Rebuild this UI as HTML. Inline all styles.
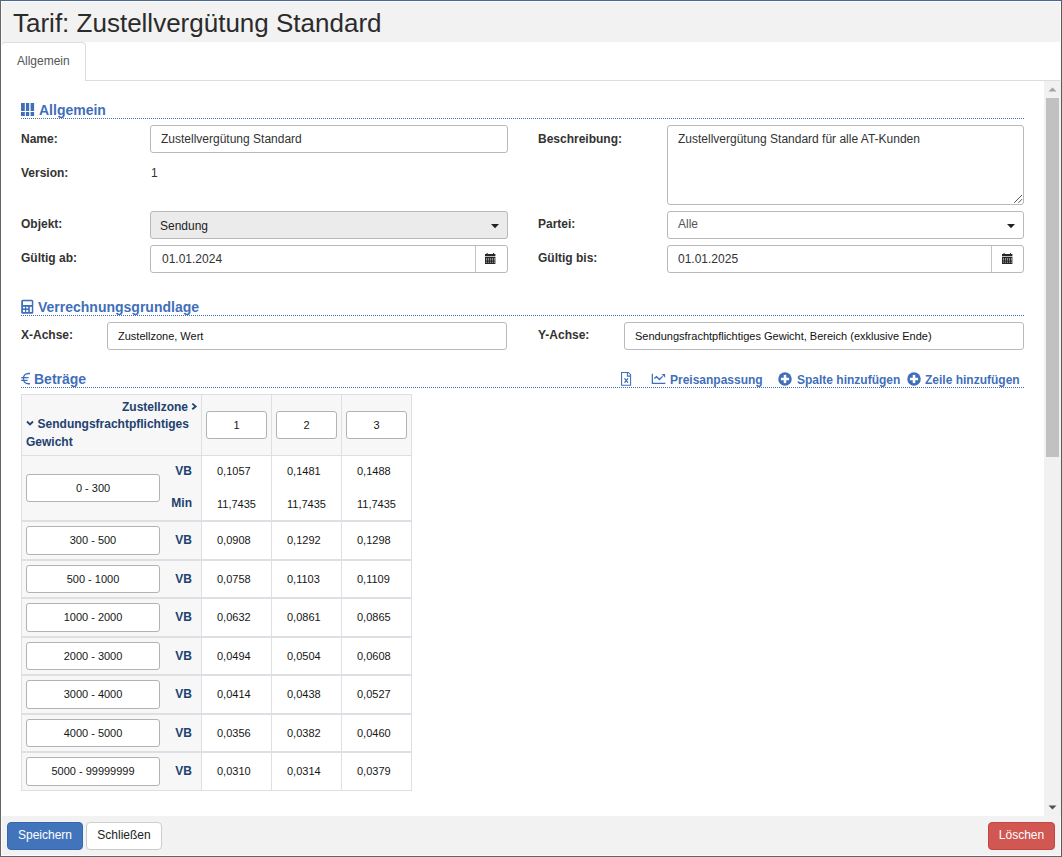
<!DOCTYPE html>
<html><head><meta charset="utf-8"><style>
*{box-sizing:border-box;margin:0;padding:0}
html,body{width:1062px;height:857px;overflow:hidden;background:#fff;font-family:"Liberation Sans",sans-serif;font-size:12px;color:#333}
.a{position:absolute;white-space:nowrap}
.r{position:absolute}
.sech{position:absolute;white-space:nowrap;font-weight:bold;font-size:14px;color:#3f6fba;line-height:16px}
.lnk{position:absolute;white-space:nowrap;font-weight:bold;font-size:12px;color:#3f6fba;line-height:14px}
.lbl{position:absolute;white-space:nowrap;font-weight:bold;font-size:12px;color:#333;line-height:14px}
.inp{position:absolute;border:1px solid #b9b9b9;border-radius:3px;background:#fff}
.txt{position:absolute;white-space:nowrap;line-height:14px;color:#333}
.dot{position:absolute;left:21px;width:1003px;height:1px;border-top:1px dotted #3f6fba}
.th{position:absolute;white-space:nowrap;font-weight:bold;font-size:12px;color:#21416f;line-height:14px}
.tv{position:absolute;white-space:nowrap;font-size:11px;color:#161616;line-height:13px}
.ti{position:absolute;border:1px solid #b3b3b3;border-radius:3px;background:#fff}
.hl{position:absolute;background:#dcdfe3}
</style></head><body>
<div class="r" style="left:1px;top:1px;width:1060px;height:41px;background:#f2f2f2;border-top:1px solid #fbfbfb;border-left:1px solid #fbfbfb"></div>
<div class="a" style="left:13px;top:8px;font-size:26px;color:#2b2b2b;line-height:30px">Tarif: Zustellvergütung Standard</div>
<div class="r" style="left:1px;top:80px;width:1060px;height:1px;background:#ddd;"></div>
<div class="r" style="left:1px;top:42px;width:85px;height:39px;border:1px solid #ddd;border-bottom:0;border-radius:4px 4px 0 0;background:#fff"></div>
<div class="a" style="left:17px;top:54px;font-size:12px;color:#555;line-height:14px">Allgemein</div>
<svg class="r" style="left:20px;top:102px" width="16" height="16" viewBox="20 102 16 16"><g fill="#3f6fba"><rect x="21" y="103" width="3.8" height="8"/><rect x="25.9" y="103" width="3.3" height="8"/><rect x="30.6" y="103" width="3.5" height="8"/><rect x="21" y="112" width="3.8" height="4"/><rect x="25.9" y="112" width="3.3" height="4"/><rect x="30.6" y="112" width="3.5" height="4"/></g></svg>
<div class="sech" style="left:39px;top:102px">Allgemein</div>
<div class="dot" style="top:118px"></div>
<div class="lbl" style="left:21px;top:132px">Name:</div>
<div class="inp" style="left:150px;top:125px;width:358px;height:28px"></div>
<div class="txt" style="left:161px;top:132px">Zustellvergütung Standard</div>
<div class="lbl" style="left:21px;top:166px">Version:</div>
<div class="txt" style="left:151px;top:166px">1</div>
<div class="lbl" style="left:538px;top:132px">Beschreibung:</div>
<div class="inp" style="left:667px;top:125px;width:357px;height:80px"></div>
<div class="txt" style="left:678px;top:132px">Zustellvergütung Standard für alle AT-Kunden</div>
<svg class="r" style="left:1010px;top:191px" width="14" height="14" viewBox="1010 191 14 14"><g stroke="#555" stroke-width="1" fill="none"><line x1="1014.2" y1="202.8" x2="1022" y2="195"/><line x1="1018.4" y1="202.8" x2="1022" y2="199.2"/></g></svg>
<div class="lbl" style="left:21px;top:217px">Objekt:</div>
<div class="inp" style="left:150px;top:211px;width:358px;height:28px;background:#ebebeb"></div>
<div class="txt" style="left:160px;top:219px;color:#222">Sendung</div>
<svg class="r" style="left:490px;top:223px" width="10" height="6" viewBox="490 223 10 6"><path d="M491 224 L499 224 L495 228.3 Z" fill="#222"/></svg>
<div class="lbl" style="left:538px;top:217px">Partei:</div>
<div class="inp" style="left:667px;top:211px;width:357px;height:28px"></div>
<div class="txt" style="left:678px;top:217px;color:#555">Alle</div>
<svg class="r" style="left:1006px;top:223px" width="10" height="6" viewBox="1006 223 10 6"><path d="M1007 224 L1015 224 L1011 228.3 Z" fill="#222"/></svg>
<div class="lbl" style="left:21px;top:251px">Gültig ab:</div>
<div class="inp" style="left:150px;top:245px;width:358px;height:28px"></div>
<div class="r" style="left:475px;top:246px;width:1px;height:26px;background:#c4c4c4;"></div>
<div class="txt" style="left:162px;top:252px">01.01.2024</div>
<svg class="r" style="left:484.2px;top:252px" width="13" height="13" viewBox="484.2 252 13 13"><g fill="#262626"><rect x="486.8" y="252.9" width="1" height="1.2"/><rect x="493.3" y="252.9" width="1" height="1.2"/><rect x="485.2" y="254" width="10.4" height="2.1"/><rect x="485.2" y="256.1" width="10.4" height="0.9" fill="#bbb"/><rect x="485.2" y="257" width="10.4" height="7"/></g><g fill="#9c9c9c"><rect x="486.09999999999997" y="258" width="1" height="2.6"/><rect x="486.09999999999997" y="261.6" width="1" height="1.3"/><rect x="488.09999999999997" y="258" width="1" height="2.6"/><rect x="488.09999999999997" y="261.6" width="1" height="1.3"/><rect x="490.09999999999997" y="258" width="1" height="2.6"/><rect x="490.09999999999997" y="261.6" width="1" height="1.3"/><rect x="492.09999999999997" y="258" width="1" height="2.6"/><rect x="492.09999999999997" y="261.6" width="1" height="1.3"/><rect x="494.09999999999997" y="258" width="1" height="2.6"/><rect x="494.09999999999997" y="261.6" width="1" height="1.3"/></g></svg>
<div class="lbl" style="left:538px;top:251px">Gültig bis:</div>
<div class="inp" style="left:667px;top:245px;width:357px;height:28px"></div>
<div class="r" style="left:991px;top:246px;width:1px;height:26px;background:#c4c4c4;"></div>
<div class="txt" style="left:678px;top:252px">01.01.2025</div>
<svg class="r" style="left:1001px;top:252px" width="13" height="13" viewBox="1001 252 13 13"><g fill="#262626"><rect x="1003.6" y="252.9" width="1" height="1.2"/><rect x="1010.1" y="252.9" width="1" height="1.2"/><rect x="1002" y="254" width="10.4" height="2.1"/><rect x="1002" y="256.1" width="10.4" height="0.9" fill="#bbb"/><rect x="1002" y="257" width="10.4" height="7"/></g><g fill="#9c9c9c"><rect x="1002.9" y="258" width="1" height="2.6"/><rect x="1002.9" y="261.6" width="1" height="1.3"/><rect x="1004.9" y="258" width="1" height="2.6"/><rect x="1004.9" y="261.6" width="1" height="1.3"/><rect x="1006.9" y="258" width="1" height="2.6"/><rect x="1006.9" y="261.6" width="1" height="1.3"/><rect x="1008.9" y="258" width="1" height="2.6"/><rect x="1008.9" y="261.6" width="1" height="1.3"/><rect x="1010.9" y="258" width="1" height="2.6"/><rect x="1010.9" y="261.6" width="1" height="1.3"/></g></svg>
<svg class="r" style="left:20px;top:299px" width="15" height="16" viewBox="20 299 15 16"><rect x="21.2" y="299.8" width="12.1" height="14" rx="1.5" fill="#3f6fba"/><g fill="#fff"><rect x="23" y="301.3" width="8.8" height="3.7"/><rect x="23" y="306.8" width="2" height="1.6"/><rect x="26.2" y="306.8" width="2" height="1.6"/><rect x="23" y="310" width="2" height="2"/><rect x="26.2" y="310" width="2" height="2"/><rect x="29.8" y="306.8" width="2" height="5.2"/></g></svg>
<div class="sech" style="left:38px;top:299px">Verrechnungsgrundlage</div>
<div class="dot" style="top:315px"></div>
<div class="lbl" style="left:21px;top:328px">X-Achse:</div>
<div class="inp" style="left:107px;top:322px;width:400px;height:28px"></div>
<div class="txt" style="left:118px;top:329px;font-size:11px;color:#111">Zustellzone, Wert</div>
<div class="lbl" style="left:538px;top:328px">Y-Achse:</div>
<div class="inp" style="left:624px;top:322px;width:400px;height:28px"></div>
<div class="txt" style="left:635px;top:329px;font-size:11px;color:#111">Sendungsfrachtpflichtiges Gewicht, Bereich (exklusive Ende)</div>
<svg class="r" style="left:19px;top:371px" width="13" height="15" viewBox="19 371 13 15"><g fill="none" stroke="#3f6fba" stroke-width="1.4"><path d="M30 373.5 H28.6 C25.2 373.5 23.4 376 23.4 378.6 C23.4 381.3 25.2 383.8 28.6 383.8 H30"/><path d="M21.2 377.6 H28.6 M21.2 380.4 H27.6"/></g></svg>
<div class="sech" style="left:34px;top:371px">Beträge</div>
<div class="dot" style="top:387px"></div>
<svg class="r" style="left:620px;top:371px" width="13" height="16" viewBox="620 371 13 16"><g fill="none" stroke="#3f6fba" stroke-width="1.05"><path d="M621.55 372.45 H628.3 L630.6 374.75 V385.2 H621.55 Z"/><path d="M627.4 372.45 V376.1 H630.6"/><path d="M624.5 378.4 L628 382.6 M628 378.4 L624.5 382.6" stroke-width="1.35"/></g></svg>
<svg class="r" style="left:650px;top:372px" width="17" height="13" viewBox="650 372 17 13"><g fill="none" stroke="#3f6fba" stroke-width="1.25"><path d="M652.35 373.8 V383.35 H665.4"/><path d="M654.3 378.6 L656.5 376.7 L659.5 379.5 L662.6 376.4" stroke-width="1.3"/></g><path d="M661.6 374.1 H665.1 V377.7 Z" fill="#3f6fba"/></svg>
<div class="lnk" style="left:670px;top:373px">Preisanpassung</div>
<svg class="r" style="left:777px;top:370.7px" width="16" height="16" viewBox="777 370.7 16 16"><circle cx="785" cy="378.7" r="6.75" fill="#3f6fba"/><rect x="780.9" y="377.45" width="8.2" height="2.5" fill="#fff"/><rect x="783.75" y="374.59999999999997" width="2.5" height="8.2" fill="#fff"/></svg>
<div class="lnk" style="left:797px;top:373px">Spalte hinzufügen</div>
<svg class="r" style="left:905.9px;top:370.7px" width="16" height="16" viewBox="905.9 370.7 16 16"><circle cx="913.9" cy="378.7" r="6.75" fill="#3f6fba"/><rect x="909.8" y="377.45" width="8.2" height="2.5" fill="#fff"/><rect x="912.65" y="374.59999999999997" width="2.5" height="8.2" fill="#fff"/></svg>
<div class="lnk" style="left:925px;top:373px">Zeile hinzufügen</div>
<div class="r" style="left:22px;top:395px;width:389px;height:60px;background:#f7f7f7;"></div>
<div class="r" style="left:22px;top:456px;width:179px;height:334px;background:#f7f7f7;"></div>
<div class="th" style="left:122px;top:400px">Zustellzone</div>
<svg class="r" style="left:190px;top:402px" width="8" height="9" viewBox="190 402 8 9"><path d="M192.3 403.6 L195.6 406.4 L192.3 409.2" fill="none" stroke="#25446f" stroke-width="1.9"/></svg>
<svg class="r" style="left:25px;top:419px" width="10" height="8" viewBox="0 0 10 8"><path d="M2 2.5 L5 5.5 L8 2.5" fill="none" stroke="#25446f" stroke-width="1.8"/></svg>
<div class="th" style="left:37.6px;top:417px">Sendungsfrachtpflichtiges</div>
<div class="th" style="left:26px;top:435px">Gewicht</div>
<div class="ti" style="left:206px;top:411px;width:61px;height:28px"></div>
<div class="tv" style="left:206px;top:419px;width:61px;text-align:center">1</div>
<div class="ti" style="left:276px;top:411px;width:61px;height:28px"></div>
<div class="tv" style="left:276px;top:419px;width:61px;text-align:center">2</div>
<div class="ti" style="left:346px;top:411px;width:61px;height:28px"></div>
<div class="tv" style="left:346px;top:419px;width:61px;text-align:center">3</div>
<div class="ti" style="left:26px;top:474px;width:134px;height:28px"></div>
<div class="tv" style="left:26px;top:482px;width:134px;text-align:center">0 - 300</div>
<div class="th" style="left:142px;width:50px;text-align:right;top:464px">VB</div>
<div class="th" style="left:142px;width:50px;text-align:right;top:496px">Min</div>
<div class="tv" style="left:217px;top:465px">0,1057</div>
<div class="tv" style="left:217px;top:498px">11,7435</div>
<div class="tv" style="left:287px;top:465px">0,1481</div>
<div class="tv" style="left:287px;top:498px">11,7435</div>
<div class="tv" style="left:357px;top:465px">0,1488</div>
<div class="tv" style="left:357px;top:498px">11,7435</div>
<div class="ti" style="left:26px;top:526px;width:134px;height:29px"></div>
<div class="tv" style="left:26px;top:534px;width:134px;text-align:center">300 - 500</div>
<div class="th" style="left:142px;width:50px;text-align:right;top:533px">VB</div>
<div class="tv" style="left:217px;top:534px">0,0908</div>
<div class="tv" style="left:287px;top:534px">0,1292</div>
<div class="tv" style="left:357px;top:534px">0,1298</div>
<div class="ti" style="left:26px;top:565px;width:134px;height:28px"></div>
<div class="tv" style="left:26px;top:573px;width:134px;text-align:center">500 - 1000</div>
<div class="th" style="left:142px;width:50px;text-align:right;top:572px">VB</div>
<div class="tv" style="left:217px;top:573px">0,0758</div>
<div class="tv" style="left:287px;top:573px">0,1103</div>
<div class="tv" style="left:357px;top:573px">0,1109</div>
<div class="ti" style="left:26px;top:603px;width:134px;height:29px"></div>
<div class="tv" style="left:26px;top:611px;width:134px;text-align:center">1000 - 2000</div>
<div class="th" style="left:142px;width:50px;text-align:right;top:610px">VB</div>
<div class="tv" style="left:217px;top:611px">0,0632</div>
<div class="tv" style="left:287px;top:611px">0,0861</div>
<div class="tv" style="left:357px;top:611px">0,0865</div>
<div class="ti" style="left:26px;top:642px;width:134px;height:28px"></div>
<div class="tv" style="left:26px;top:650px;width:134px;text-align:center">2000 - 3000</div>
<div class="th" style="left:142px;width:50px;text-align:right;top:649px">VB</div>
<div class="tv" style="left:217px;top:650px">0,0494</div>
<div class="tv" style="left:287px;top:650px">0,0504</div>
<div class="tv" style="left:357px;top:650px">0,0608</div>
<div class="ti" style="left:26px;top:680px;width:134px;height:29px"></div>
<div class="tv" style="left:26px;top:688px;width:134px;text-align:center">3000 - 4000</div>
<div class="th" style="left:142px;width:50px;text-align:right;top:687px">VB</div>
<div class="tv" style="left:217px;top:688px">0,0414</div>
<div class="tv" style="left:287px;top:688px">0,0438</div>
<div class="tv" style="left:357px;top:688px">0,0527</div>
<div class="ti" style="left:26px;top:719px;width:134px;height:28px"></div>
<div class="tv" style="left:26px;top:727px;width:134px;text-align:center">4000 - 5000</div>
<div class="th" style="left:142px;width:50px;text-align:right;top:726px">VB</div>
<div class="tv" style="left:217px;top:727px">0,0356</div>
<div class="tv" style="left:287px;top:727px">0,0382</div>
<div class="tv" style="left:357px;top:727px">0,0460</div>
<div class="ti" style="left:26px;top:757px;width:134px;height:29px"></div>
<div class="tv" style="left:26px;top:765px;width:134px;text-align:center">5000 - 99999999</div>
<div class="th" style="left:142px;width:50px;text-align:right;top:764px">VB</div>
<div class="tv" style="left:217px;top:765px">0,0310</div>
<div class="tv" style="left:287px;top:765px">0,0314</div>
<div class="tv" style="left:357px;top:765px">0,0379</div>
<div class="r" style="left:21px;top:394px;width:391px;height:1px;background:#dcdfe3;"></div>
<div class="r" style="left:21px;top:455px;width:391px;height:1px;background:#dcdfe3;"></div>
<div class="r" style="left:21px;top:520px;width:391px;height:2px;background:#dcdfe3;"></div>
<div class="r" style="left:21px;top:559px;width:391px;height:2px;background:#dcdfe3;"></div>
<div class="r" style="left:21px;top:597px;width:391px;height:2px;background:#dcdfe3;"></div>
<div class="r" style="left:21px;top:636px;width:391px;height:2px;background:#dcdfe3;"></div>
<div class="r" style="left:21px;top:674px;width:391px;height:2px;background:#dcdfe3;"></div>
<div class="r" style="left:21px;top:713px;width:391px;height:2px;background:#dcdfe3;"></div>
<div class="r" style="left:21px;top:751px;width:391px;height:2px;background:#dcdfe3;"></div>
<div class="r" style="left:21px;top:790px;width:391px;height:1px;background:#dcdfe3;"></div>
<div class="r" style="left:21px;top:394px;width:1px;height:397px;background:#dcdfe3;"></div>
<div class="r" style="left:201px;top:394px;width:1px;height:397px;background:#dcdfe3;"></div>
<div class="r" style="left:271px;top:394px;width:1px;height:397px;background:#dcdfe3;"></div>
<div class="r" style="left:341px;top:394px;width:1px;height:397px;background:#dcdfe3;"></div>
<div class="r" style="left:411px;top:394px;width:1px;height:397px;background:#dcdfe3;"></div>
<div class="r" style="left:1044px;top:81px;width:17px;height:735px;background:#f1f1f1;"></div>
<div class="r" style="left:1046px;top:98px;width:13px;height:359px;background:#c1c1c1;"></div>
<svg class="r" style="left:1044px;top:81px" width="17" height="17" viewBox="0 0 17 17"><path d="M4.5 10.5 L8.5 6.5 L12.5 10.5 Z" fill="#a3a3a3"/></svg>
<svg class="r" style="left:1044px;top:799px" width="17" height="17" viewBox="0 0 17 17"><path d="M4.5 6.5 L8.5 10.5 L12.5 6.5 Z" fill="#505050"/></svg>
<div class="r" style="left:1px;top:816px;width:1060px;height:40px;background:#f2f2f2;"></div>
<div class="a" style="left:7px;top:822px;width:76px;height:28px;background:#4274bc;border:1px solid #3667ac;border-radius:4px;color:#fff;text-align:center;line-height:25px">Speichern</div>
<div class="a" style="left:86px;top:822px;width:76px;height:28px;background:#fff;border:1px solid #ccc;border-radius:4px;color:#222;text-align:center;line-height:25px">Schließen</div>
<div class="a" style="left:988px;top:822px;width:67px;height:28px;background:#d05752;border:1px solid #c9443f;border-radius:4px;color:#fff;text-align:center;line-height:25px">Löschen</div>
<div class="r" style="left:1px;top:1px;width:1060px;height:1px;background:#fbfbfb;"></div>
<div class="r" style="left:1px;top:1px;width:1px;height:855px;background:#fbfbfb;"></div>
<div class="r" style="left:1060px;top:1px;width:1px;height:80px;background:#fbfbfb;"></div>
<div class="r" style="left:1060px;top:816px;width:1px;height:40px;background:#fbfbfb;"></div>
<div class="r" style="left:1px;top:855px;width:1060px;height:1px;background:#fbfbfb;"></div>
<div class="r" style="left:0px;top:0px;width:1px;height:857px;background:#666;"></div>
<div class="r" style="left:1061px;top:0px;width:1px;height:857px;background:#5a5a5a;"></div>
<div class="r" style="left:0px;top:0px;width:1062px;height:1px;background:#4a6890;"></div>
<div class="r" style="left:0px;top:856px;width:1062px;height:1px;background:#666;"></div>
</body></html>
